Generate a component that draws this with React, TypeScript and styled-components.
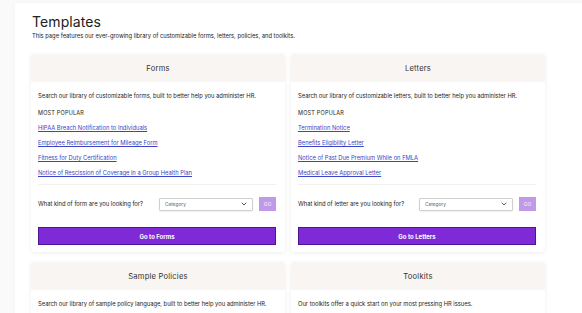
import { createGlobalStyle, styled } from 'styled-components';

const GlobalStyle = createGlobalStyle`
  html, body {
    margin: 0;
    padding: 0;
    background: #fafafa;
    font-family: Inter, "Liberation Sans", sans-serif;
    color: #222;
  }
`;

const Page = styled.main`
  margin: 3px 0 0 15px;
  background: #fff;
  min-height: 310px;
  padding: 10px 0 0 17px;
  box-shadow: 0 0 6px rgba(0, 0, 0, 0.03);
`;

const Title = styled.h1`
  margin: 0;
  font-size: 14px;
  font-weight: 400;
  letter-spacing: 0.1px;
  line-height: 18px;
`;

const Intro = styled.p`
  margin: 1px 0 0 0;
  font-size: 5.8px;
  line-height: 8px;
`;

const Grid = styled.div`
  display: grid;
  grid-template-columns: 254px 254px;
  column-gap: 6px;
  row-gap: 10px;
  margin-top: 14px;
  margin-left: -1px;
`;

const Card = styled.section`
  background: #fff;
  border-radius: 3px;
  box-shadow: 0 1px 4px rgba(0, 0, 0, 0.07);
  overflow: hidden;
`;

const CardHeader = styled.h2`
  margin: 0;
  height: 28px;
  display: flex;
  align-items: center;
  justify-content: center;
  background: #f8f5f2;
  font-size: 7.6px;
  font-weight: 400;
  letter-spacing: 0.2px;
  color: #333;
`;

const CardBody = styled.div`
  padding: 10px 9px 3px 7px;
  font-size: 5.8px;
`;

const Text = styled.p`
  margin: 0 0 9px 0;
  line-height: 8px;
`;

const Label = styled.p`
  margin: 0 0 7px 0;
  line-height: 8px;
  font-size: 5.5px;
  letter-spacing: 0.2px;
  text-transform: uppercase;
`;

const LinkList = styled.ul`
  list-style: none;
  margin: 0;
  padding: 0 0 7px 0;
  border-bottom: 1px solid #f0f0f0;
  display: flex;
  flex-direction: column;
  gap: 7px;
`;

const LinkItem = styled.a`
  display: block;
  line-height: 8px;
  color: #3a45c8;
  text-decoration: underline;
`;

const SearchRow = styled.div`
  display: flex;
  align-items: center;
  margin-top: 12px;
  height: 14px;
`;

const Question = styled.span`
  flex: 1;
  line-height: 8px;
`;

const Select = styled.div`
  width: 94px;
  height: 13px;
  border: 1px solid #cfcfcf;
  border-radius: 1px;
  display: flex;
  align-items: center;
  justify-content: space-between;
  padding: 0 5px 0 5px;
  box-sizing: border-box;
  font-size: 4.8px;
  color: #666;
  box-shadow: 0 1px 2px rgba(0, 0, 0, 0.06);
`;

const GoButton = styled.button`
  margin-left: 6px;
  width: 17px;
  height: 14px;
  border: none;
  background: #c09ae9;
  color: #e6d6f8;
  font-family: inherit;
  font-size: 5px;
  font-weight: 700;
  padding: 0;
`;

const PrimaryButton = styled.button`
  display: block;
  width: 100%;
  height: 18px;
  margin-top: 16px;
  margin-bottom: 4px;
  background: #7e2ad6;
  border: 1px solid #4d1398;
  color: #fff;
  font-family: inherit;
  font-size: 6px;
  font-weight: 700;
  padding: 0;
`;

const Chevron = () => (
  <svg width="6" height="4" viewBox="0 0 6 4">
    <path d="M0.7 0.7 L3 3 L5.3 0.7" fill="none" stroke="#333" strokeWidth="0.8" />
  </svg>
);

type Finder = {
  title: string;
  kind: string;
  links: string[];
  button: string;
};

const finders: Finder[] = [
  {
    title: 'Forms',
    kind: 'form',
    links: [
      'HIPAA Breach Notification to Individuals',
      'Employee Reimbursement for Mileage Form',
      'Fitness for Duty Certification',
      'Notice of Rescission of Coverage in a Group Health Plan',
    ],
    button: 'Go to Forms',
  },
  {
    title: 'Letters',
    kind: 'letter',
    links: [
      'Termination Notice',
      'Benefits Eligibility Letter',
      'Notice of Past Due Premium While on FMLA',
      'Medical Leave Approval Letter',
    ],
    button: 'Go to Letters',
  },
];

function App() {
  return (
    <>
      <GlobalStyle />
      <Page>
        <Title>Templates</Title>
        <Intro>
          This page features our ever-growing library of customizable forms, letters, policies, and toolkits.
        </Intro>
        <Grid>
          {finders.map((f) => (
            <Card key={f.title}>
              <CardHeader>{f.title}</CardHeader>
              <CardBody>
                <Text>
                  Search our library of customizable {f.kind}s, built to better help you administer HR.
                </Text>
                <Label>Most Popular</Label>
                <LinkList>
                  {f.links.map((l) => (
                    <li key={l}>
                      <LinkItem href="#">{l}</LinkItem>
                    </li>
                  ))}
                </LinkList>
                <SearchRow>
                  <Question>What kind of {f.kind} are you looking for?</Question>
                  <Select>
                    <span>Category</span>
                    <Chevron />
                  </Select>
                  <GoButton>GO</GoButton>
                </SearchRow>
                <PrimaryButton>{f.button}</PrimaryButton>
              </CardBody>
            </Card>
          ))}
          <Card>
            <CardHeader>Sample Policies</CardHeader>
            <CardBody>
              <Text>Search our library of sample policy language, built to better help you administer HR.</Text>
            </CardBody>
          </Card>
          <Card>
            <CardHeader>Toolkits</CardHeader>
            <CardBody>
              <Text>Our toolkits offer a quick start on your most pressing HR issues.</Text>
            </CardBody>
          </Card>
        </Grid>
      </Page>
    </>
  );
}

export default App;
